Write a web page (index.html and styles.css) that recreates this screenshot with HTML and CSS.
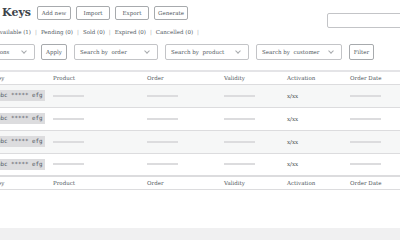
FILE: index.html
```html
<!DOCTYPE html>
<html lang="en">

<head>
    <meta charset="UTF-8">
    <meta name="viewport" content="width=device-width, initial-scale=1.0">
    <link rel="stylesheet" href="styles.css">
    <title>License Keys</title>
</head>

<body>
    <div class="page">
        <div class="titlebar">
            <h1>License Keys</h1>
            <button class="btn">Add new</button>
            <button class="btn">Import</button>
            <button class="btn">Export</button>
            <button class="btn">Generate</button>
            <input type="search" class="searchbox">
        </div>

        <ul class="statuses">
            <li>Available (1)</li>
            <li>Pending (0)</li>
            <li>Sold (0)</li>
            <li>Expired (0)</li>
            <li>Cancelled (0)</li>
        </ul>

        <form class="filters">
            <div class="select bulk">Bulk actions</div>
            <button class="btn apply">Apply</button>
            <div class="select">Search by&nbsp; order</div>
            <div class="select">Search by&nbsp; product</div>
            <div class="select wide">Search by&nbsp; customer</div>
            <button class="btn filter">Filter</button>
        </form>

        <table class="keys">
            <colgroup>
                <col class="c-check">
                <col class="c-key">
                <col class="c-product">
                <col class="c-order">
                <col class="c-validity">
                <col class="c-activation">
                <col class="c-date">
            </colgroup>
            <thead>
                <tr>
                    <th></th>
                    <th>Key</th>
                    <th>Product</th>
                    <th>Order</th>
                    <th>Validity</th>
                    <th>Activation</th>
                    <th>Order Date</th>
                </tr>
            </thead>
            <tbody id="rows"></tbody>
            <tfoot>
                <tr>
                    <th></th>
                    <th>Key</th>
                    <th>Product</th>
                    <th>Order</th>
                    <th>Validity</th>
                    <th>Activation</th>
                    <th>Order Date</th>
                </tr>
            </tfoot>
        </table>
    </div>

    <script>
        // placeholder rows
        let rows = document.getElementById("rows");
        for (let i = 0; i < 4; i++) {
            rows.innerHTML += `<tr class="${i % 2 == 0 ? "alt" : ""}">
                <td></td>
                <td><code class="chip">abc ***** efg</code></td>
                <td><span class="bar"></span></td>
                <td><span class="bar"></span></td>
                <td><span class="bar"></span></td>
                <td>x/xx</td>
                <td><span class="bar"></span></td>
            </tr>`;
        }
    </script>
</body>

</html>
```

FILE: styles.css
```css
* {
    padding: 0;
    margin: 0;
    box-sizing: border-box;
}

body {
    background-color: #f0f0f1;
    overflow: hidden;
    font-family: "DejaVu Serif", serif;
    color: #50575e;
}

.page {
    margin-left: -60px;
    width: 480px;
    padding: 6px 0 38px;
    background-color: #fff;
    box-shadow: 0 2px 6px rgba(0, 0, 0, 0.12);
}

.titlebar {
    display: flex;
    align-items: flex-start;
    gap: 5px;
    height: 21px;
}

.titlebar h1 {
    width: 91px;
    margin-right: 1px;
    text-align: right;
    white-space: nowrap;
    font-size: 11px;
    line-height: 14px;
    color: #3c434a;
}

.btn {
    height: 14px;
    width: 34px;
    border: 1px solid #a7aaad;
    border-radius: 2px;
    background-color: #fff;
    font-family: inherit;
    font-size: 5.5px;
    color: #50575e;
}

.searchbox {
    margin-left: auto;
    margin-top: 7px;
    margin-right: 3px;
    width: 90px;
    height: 15px;
    border: 1px solid #c3c4c7;
    border-radius: 2px;
}

.statuses {
    display: flex;
    list-style: none;
    padding-left: 56px;
    margin-top: 1px;
    font-size: 5.5px;
    line-height: 8px;
    color: #50575e;
}

.statuses li::after {
    content: "|";
    color: #a7aaad;
    padding: 0 4px;
}

.filters {
    display: flex;
    gap: 7px;
    margin-top: 8px;
    height: 16px;
}

.select {
    position: relative;
    width: 84px;
    height: 16px;
    border: 1px solid #c3c4c7;
    border-radius: 2px;
    padding: 0 5px;
    font-size: 5.5px;
    line-height: 14px;
    white-space: nowrap;
}

.select::after {
    content: "";
    position: absolute;
    right: 8px;
    top: 4px;
    width: 3px;
    height: 3px;
    border-right: 1px solid #a7aaad;
    border-bottom: 1px solid #a7aaad;
    transform: rotate(45deg);
}

.select.bulk {
    width: 66px;
    margin-left: 29px;
    margin-right: -1px;
}

.select.wide {
    width: 86px;
}

.apply {
    width: 26px;
    height: 16px;
}

.filter {
    width: 25px;
    height: 16px;
}

.keys {
    margin-top: 10px;
    width: 480px;
    border-collapse: collapse;
    table-layout: fixed;
    font-size: 5.5px;
    border-top: 2px solid #e4e4e7;
}

.c-check { width: 49px; }
.c-key { width: 59px; }
.c-product { width: 94px; }
.c-order { width: 77px; }
.c-validity { width: 63px; }
.c-activation { width: 63px; }

.keys th {
    text-align: left;
    font-weight: normal;
    height: 13px;
    padding: 0 5px;
    color: #50575e;
}

.keys thead th {
    border-bottom: 1px solid #dcdcde;
}

.keys tfoot th {
    border-top: 2px solid #dcdcde;
    border-bottom: 1px solid #dcdcde;
}

.keys td {
    height: 23px;
    padding: 0 5px;
    border-bottom: 1px solid #dcdcde;
    color: #3c434a;
    white-space: nowrap;
}

.keys tr.alt td {
    background-color: #f6f7f7;
}

.chip {
    display: inline-block;
    background-color: #dcdcde;
    padding: 0 3px;
    font-family: "DejaVu Sans Mono", monospace;
    font-size: 5.8px;
    line-height: 11px;
    color: #50575e;
}

.bar {
    display: block;
    width: 31px;
    height: 2px;
    background-color: #dcdcde;
}
```
